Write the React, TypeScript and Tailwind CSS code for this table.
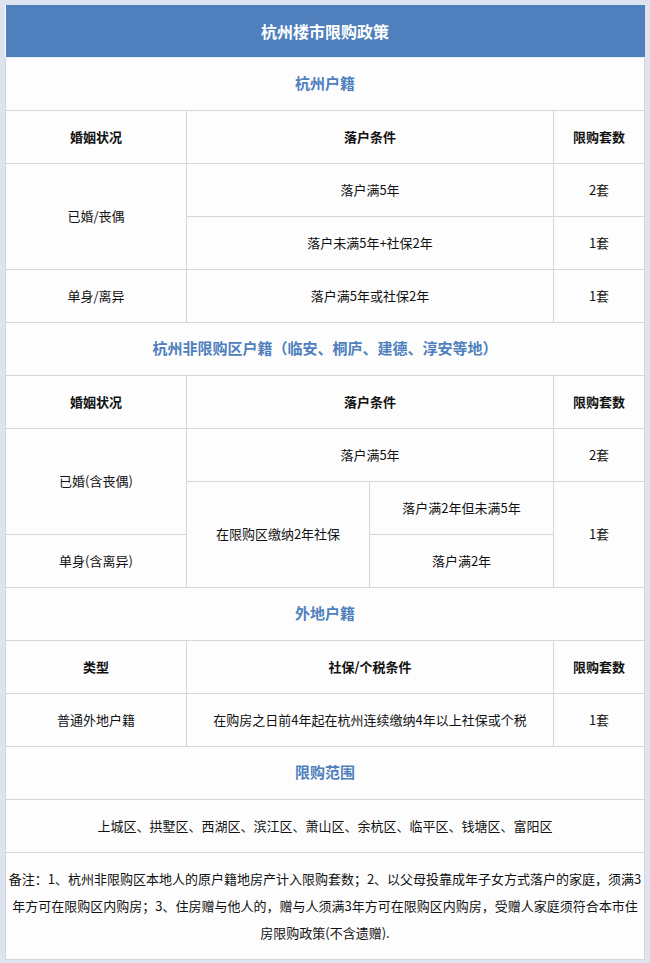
const font = { fontFamily: '"Noto Sans CJK SC", "Noto Sans", sans-serif' }

function Section({ title }: { title: string }) {
  return (
    <tr>
      <td colSpan={4} className="h-[53px] border border-[#d5d6da] text-center text-[15px] font-bold text-[#4f80bd]">
        {title}
      </td>
    </tr>
  )
}

const cell = "h-[53px] border border-[#d5d6da] text-center text-[13px] text-[#111]"
const head = "h-[53px] border border-[#d5d6da] text-center text-[13px] font-bold text-[#111]"

export default function App() {
  return (
    <div className="min-h-[963px] w-[650px] bg-[#dde3ef] pl-[5px] pt-[5px] pr-[6px] pb-[6px]" style={font}>
      <table className="w-[639px] table-fixed border-collapse bg-[#fdfdfe]">
        <colgroup>
          <col className="w-[181px]" />
          <col className="w-[183px]" />
          <col className="w-[184px]" />
          <col className="w-[91px]" />
        </colgroup>
        <tbody>
          <tr>
            <td colSpan={4} className="h-[52px] border-b border-[#e8ecf3] bg-[#4f80bd] text-center text-[16px] font-bold text-white">
              杭州楼市限购政策
            </td>
          </tr>

          <Section title="杭州户籍" />
          <tr>
            <td className={head}>婚姻状况</td>
            <td colSpan={2} className={head}>落户条件</td>
            <td className={head}>限购套数</td>
          </tr>
          <tr>
            <td rowSpan={2} className={cell}>已婚/丧偶</td>
            <td colSpan={2} className={cell}>落户满5年</td>
            <td className={cell}>2套</td>
          </tr>
          <tr>
            <td colSpan={2} className={cell}>落户未满5年+社保2年</td>
            <td className={cell}>1套</td>
          </tr>
          <tr>
            <td className={cell}>单身/离异</td>
            <td colSpan={2} className={cell}>落户满5年或社保2年</td>
            <td className={cell}>1套</td>
          </tr>

          <Section title="杭州非限购区户籍（临安、桐庐、建德、淳安等地）" />
          <tr>
            <td className={head}>婚姻状况</td>
            <td colSpan={2} className={head}>落户条件</td>
            <td className={head}>限购套数</td>
          </tr>
          <tr>
            <td rowSpan={2} className={cell}>已婚(含丧偶)</td>
            <td colSpan={2} className={cell}>落户满5年</td>
            <td className={cell}>2套</td>
          </tr>
          <tr>
            <td rowSpan={2} className={cell}>在限购区缴纳2年社保</td>
            <td className={cell}>落户满2年但未满5年</td>
            <td rowSpan={2} className={cell}>1套</td>
          </tr>
          <tr>
            <td className={cell}>单身(含离异)</td>
            <td className={cell}>落户满2年</td>
          </tr>

          <Section title="外地户籍" />
          <tr>
            <td className={head}>类型</td>
            <td colSpan={2} className={head}>社保/个税条件</td>
            <td className={head}>限购套数</td>
          </tr>
          <tr>
            <td className={cell}>普通外地户籍</td>
            <td colSpan={2} className={cell}>在购房之日前4年起在杭州连续缴纳4年以上社保或个税</td>
            <td className={cell}>1套</td>
          </tr>

          <Section title="限购范围" />
          <tr>
            <td colSpan={4} className={cell}>上城区、拱墅区、西湖区、滨江区、萧山区、余杭区、临平区、钱塘区、富阳区</td>
          </tr>
          <tr>
            <td colSpan={4} className="border border-[#d5d6da] px-0 pt-[12px] pb-[13px] text-center text-[13px] leading-[27px] text-[#111]">
              备注：1、杭州非限购区本地人的原户籍地房产计入限购套数；2、以父母投靠成年子女方式落户的家庭，须满3年方可在限购区内购房；3、住房赠与他人的，赠与人须满3年方可在限购区内购房，受赠人家庭须符合本市住房限购政策(不含遗赠).
            </td>
          </tr>
        </tbody>
      </table>
    </div>
  )
}
